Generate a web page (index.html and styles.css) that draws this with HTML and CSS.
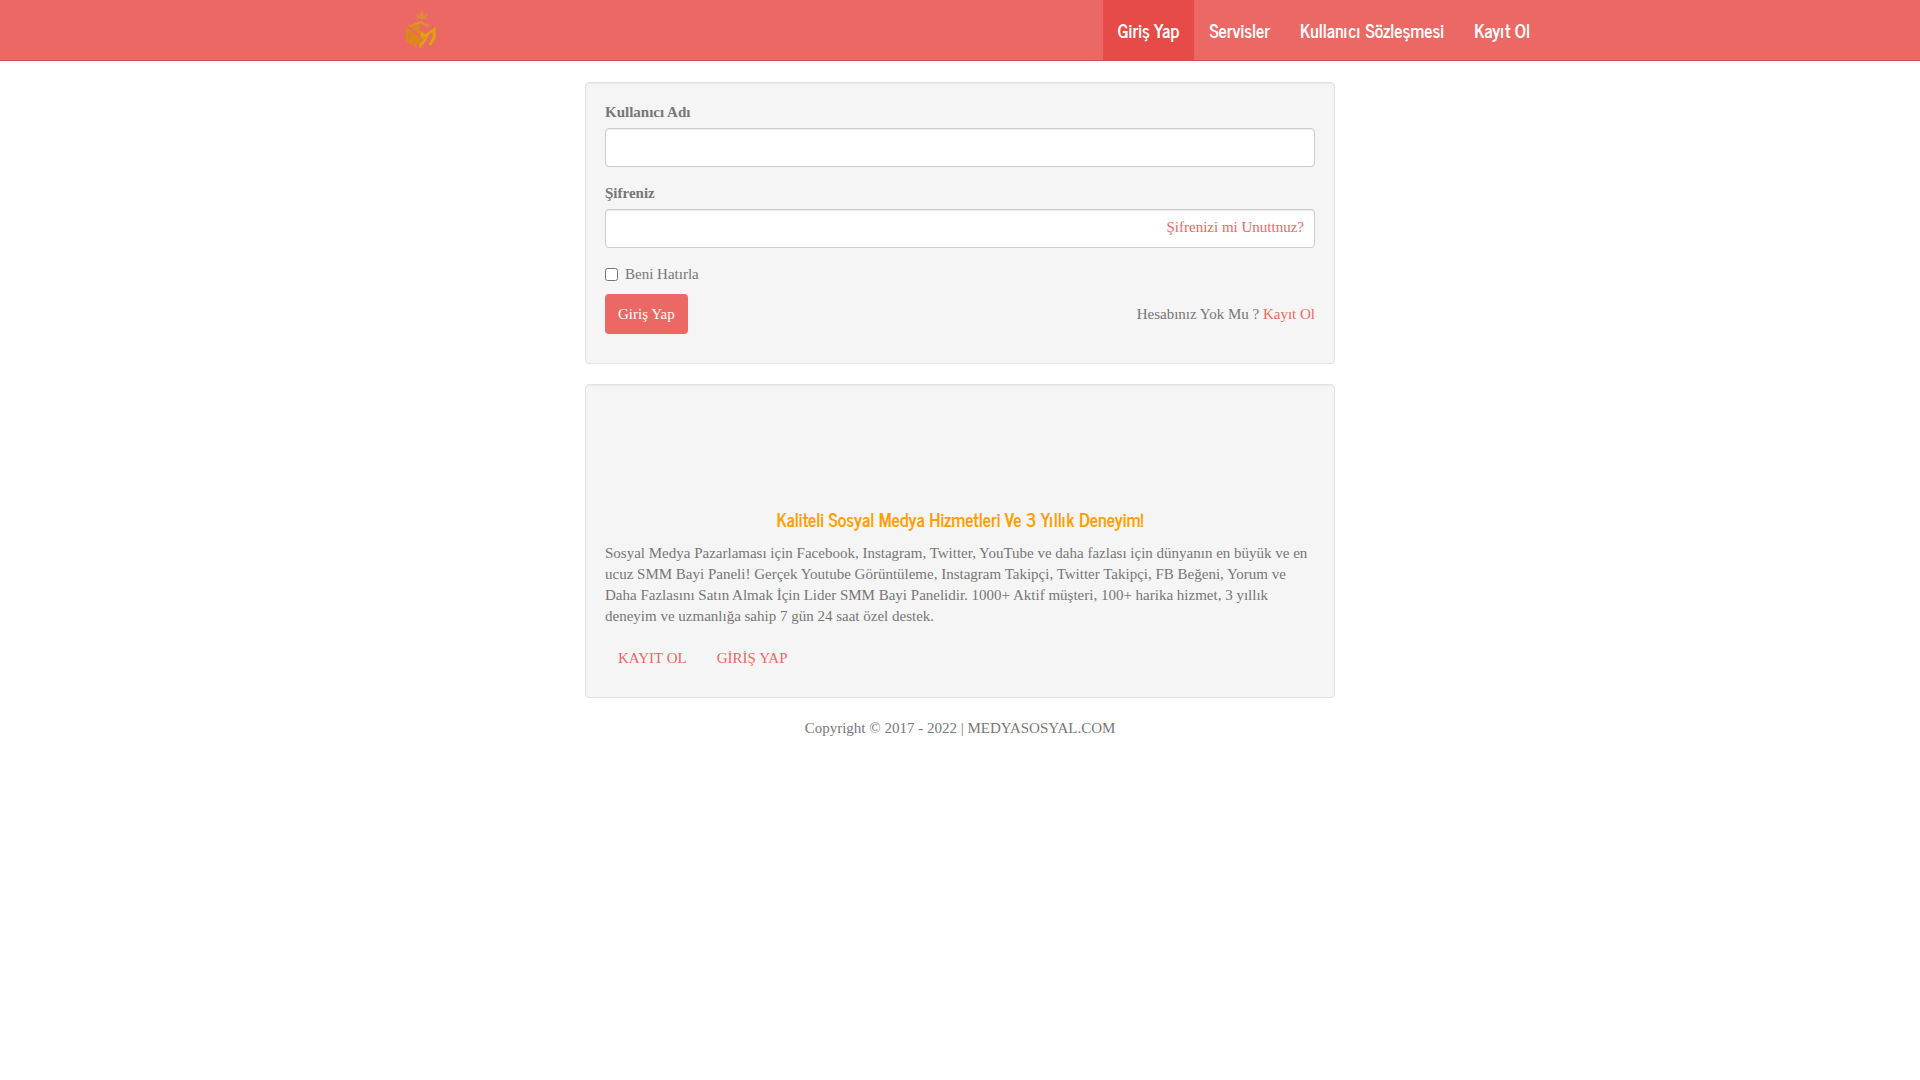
FILE: index.html
```html
<!DOCTYPE html>
<html lang="tr">

<head>
    <meta charset="utf-8">
    <meta name="viewport" content="width=device-width, initial-scale=1">
    <title>MEDYASOSYAL.COM - Giriş Yap</title>
    <link rel="stylesheet" href="styles.css">
</head>

<body>

    <nav class="navbar">
        <div class="container">
            <a class="navbar-brand" href="#" aria-label="MEDYASOSYAL.COM">
                <svg class="logo" viewBox="36 28 108 120" aria-hidden="true">
                    <!-- crown -->
                    <path d="M83 57L78 38l10 9 7-19 7 19 11-9-6 19-6-5-6 5-6-5z" fill="#df8a38"/>
                    <!-- head -->
                    <path d="M58 77l34-12 25 11" fill="none" stroke="#dc9a18" stroke-width="6"/>
                    <!-- left side -->
                    <path d="M47 79l46 36-16 24-8-5 9-15-12 9-11-9 9-13-9-7v19l14 12-4 3-18-14z" fill="#dc8a14"/>
                    <path d="M62 79l27-9v34z" fill="#d98a20"/>
                    <!-- right side -->
                    <path d="M91 90l15 11 31-23v34l-14 24-7-5 12-21V93l-24 18-13-8z" fill="#dfa408"/>
                    <path d="M117 95l-12 26-14 17v-9l14-12-14-13" fill="none" stroke="#dfa408" stroke-width="5"/>
                </svg>
            </a>
            <ul class="navbar-nav">
                <li class="active"><a href="#">Giriş Yap</a></li>
                <li><a href="#">Servisler</a></li>
                <li><a href="#">Kullanıcı Sözleşmesi</a></li>
                <li><a href="#">Kayıt Ol</a></li>
            </ul>
        </div>
    </nav>

    <main class="content">
        <form class="well" action="#" method="post">
            <div class="form-group">
                <label for="username">Kullanıcı Adı</label>
                <input type="text" class="form-control" id="username" name="username">
            </div>
            <div class="form-group">
                <label for="password">Şifreniz</label>
                <div class="password-box">
                    <input type="password" class="form-control" id="password" name="password">
                    <a class="forgot" href="#">Şifrenizi mi Unuttnuz?</a>
                </div>
            </div>
            <div class="checkbox">
                <input type="checkbox" id="remember" name="remember">
                <label for="remember">Beni Hatırla</label>
            </div>
            <div class="form-actions">
                <button type="submit" class="btn btn-primary">Giriş Yap</button>
                <span>Hesabınız Yok Mu ? <a href="#">Kayıt Ol</a></span>
            </div>
        </form>

        <section class="well intro">
            <h4>Kaliteli Sosyal Medya Hizmetleri Ve 3 Yıllık Deneyim!</h4>
            <p>Sosyal Medya Pazarlaması için Facebook, Instagram, Twitter, YouTube ve daha fazlası için dünyanın en büyük ve en ucuz SMM Bayi Paneli! Gerçek Youtube Görüntüleme, Instagram Takipçi, Twitter Takipçi, FB Beğeni, Yorum ve Daha Fazlasını Satın Almak İçin Lider SMM Bayi Panelidir. 1000+ Aktif müşteri, 100+ harika hizmet, 3 yıllık deneyim ve uzmanlığa sahip 7 gün 24 saat özel destek.</p>
            <div class="intro-links">
                <a class="btn" href="#">KAYIT OL</a>
                <a class="btn" href="#">GİRİŞ YAP</a>
            </div>
        </section>
    </main>

    <footer class="footer">Copyright © 2017 - 2022 | MEDYASOSYAL.COM</footer>

</body>

</html>
```
FILE: styles.css
```css
* {
    box-sizing: border-box;
}

body {
    margin: 0;
    font-family: "Liberation Serif", "Times New Roman", serif;
    font-size: 15px;
    line-height: 21px;
    color: #777777;
    background-color: #ffffff;
}

a {
    color: #eb6864;
    text-decoration: none;
}

/* Navbar */
.navbar {
    background-color: #eb6864;
    border-bottom: 1px solid #c8524e;
    margin-bottom: 21px;
}

.container {
    display: flex;
    justify-content: space-between;
    max-width: 1170px;
    min-height: 60px;
    margin: 0 auto;
}

.navbar-brand {
    display: flex;
    align-items: center;
    padding-left: 27px;
}

.logo {
    width: 36px;
    height: 40px;
}

.navbar-nav {
    display: flex;
    flex-wrap: wrap;
    list-style: none;
    margin: 0;
    padding: 0;
}

.navbar-nav a {
    display: block;
    padding: 20px 15px 19px;
    font-family: "News Cycle", "Liberation Sans Narrow", "Arial Narrow", sans-serif;
    font-size: 18px;
    font-weight: bold;
    color: #ffffff;
}

.navbar-nav .active a {
    background-color: #e74b47;
}

/* Boxes */
.content {
    max-width: 780px;
    margin: 0 auto;
    padding: 0 15px;
}

.well {
    margin-bottom: 20px;
    padding: 19px;
    background-color: #f5f5f5;
    border: 1px solid #e3e3e3;
    border-radius: 4px;
    box-shadow: inset 0 1px 1px rgba(0, 0, 0, 0.05);
}

/* Form */
.form-group {
    margin-bottom: 16px;
}

.form-group label {
    display: block;
    margin-bottom: 5px;
    font-weight: bold;
}

.form-control {
    display: block;
    width: 100%;
    height: 39px;
    padding: 8px 12px;
    font: inherit;
    color: #777777;
    background-color: #ffffff;
    border: 1px solid #cccccc;
    border-radius: 4px;
    box-shadow: inset 0 1px 1px rgba(0, 0, 0, 0.075);
}

.password-box {
    position: relative;
}

.forgot {
    position: absolute;
    top: 8px;
    right: 11px;
}

.checkbox {
    display: flex;
    align-items: center;
    gap: 7px;
    margin-bottom: 9px;
}

.checkbox input {
    width: 13px;
    height: 13px;
    margin: 0;
}

.form-actions {
    display: flex;
    justify-content: space-between;
    align-items: center;
    margin-bottom: 10px;
}

.btn {
    display: inline-block;
    padding: 8px 12px;
    font: inherit;
    border: 1px solid transparent;
    border-radius: 4px;
}

.btn-primary {
    min-height: 40px;
    color: #ffffff;
    background-color: #eb6864;
    cursor: pointer;
}

/* Intro */
.intro {
    padding-top: 124px;
}

.intro h4 {
    margin: 0 0 13px;
    font-family: "News Cycle", "Liberation Sans Narrow", "Arial Narrow", sans-serif;
    font-size: 18px;
    line-height: 21px;
    text-align: center;
    color: #ff9f00;
}

.intro p {
    margin: 0 0 12px;
}

.intro-links {
    display: flex;
    gap: 4px;
}

.footer {
    padding-bottom: 21px;
    text-align: center;
}
```
